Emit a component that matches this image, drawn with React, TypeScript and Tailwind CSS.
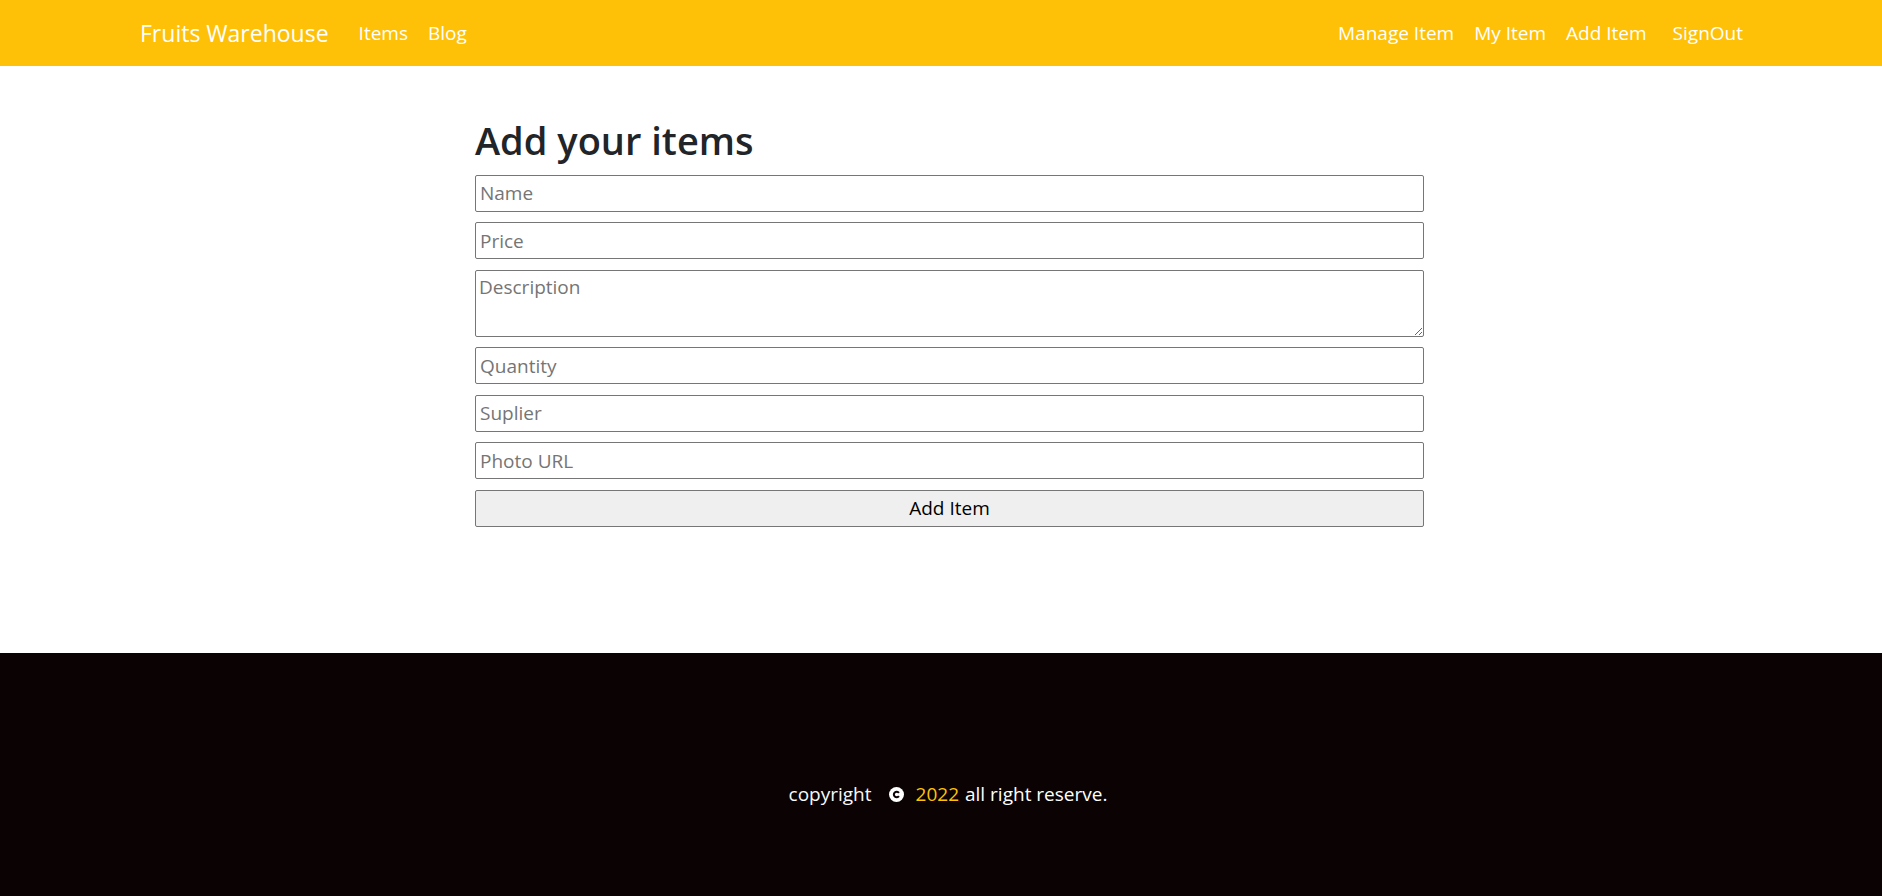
import React from 'react';

const font = { fontFamily: '"Segoe UI", "Open Sans", "Liberation Sans", sans-serif' };

function Navbar() {
  return (
    <nav className="h-[66px] bg-[#ffc107] flex items-center justify-between pl-[140px] pr-[139px] text-white">
      <div className="flex items-center">
        <a className="text-[23px] mr-[20px] leading-none">Fruits Warehouse</a>
        <a className="text-[19px] px-[10px]">Items</a>
        <a className="text-[19px] px-[10px]">Blog</a>
      </div>
      <div className="flex items-center">
        <a className="text-[19px] px-[10px]">Manage Item</a>
        <a className="text-[19px] px-[10px]">My Item</a>
        <a className="text-[19px] px-[10px]">Add Item</a>
        <a className="text-[19px] pl-[16px]">SignOut</a>
      </div>
    </nav>
  );
}

const inputCls =
  'block w-full h-[37px] border border-[#767676] rounded-[2px] px-[4px] text-[19px] text-black placeholder:text-[#757575] bg-white';

function AddItemForm() {
  return (
    <main className="pl-[475px] pt-[52px] h-[587px]">
      <div className="w-[949px]">
        <h1 className="text-[38px] font-semibold text-[#212529] leading-[1.2] mb-[11px]">Add your items</h1>
        <form className="flex flex-col gap-[10.5px]">
          <input className={inputCls} placeholder="Name" />
          <input className={inputCls} placeholder="Price" />
          <textarea
            className="block w-full h-[67px] border border-[#767676] rounded-[2px] px-[3px] py-[2px] text-[19px] placeholder:text-[#757575]"
            placeholder="Description"
          />
          <input className={inputCls} placeholder="Quantity" />
          <input className={inputCls} placeholder="Suplier" />
          <input className={inputCls} placeholder="Photo URL" />
          <button
            type="button"
            className="w-full h-[37px] bg-[#efefef] border border-[#767676] rounded-[2px] text-[19px] text-black"
          >
            Add Item
          </button>
        </form>
      </div>
    </main>
  );
}

function Footer() {
  return (
    <footer className="h-[243px] bg-[#0a0203] flex items-center justify-center pt-[40px] pl-[14px] text-[19px]">
      <p className="flex items-center text-[#f8f9fa]">
        <span>copyright</span>
        <svg className="ml-[17px] mr-[12px]" width="15" height="15" viewBox="0 0 16 16">
          <circle cx="8" cy="8" r="8" fill="#ffffff" />
          <path d="M10.6 6.2A3 3 0 1 0 10.6 9.8" fill="none" stroke="#0a0203" strokeWidth="2.2" />
        </svg>
        <span className="text-[#ffc107]">2022</span>
        <span className="ml-[6px] text-white">all right reserve.</span>
      </p>
    </footer>
  );
}

export default function App() {
  return (
    <div style={font} className="w-[1882px] min-h-[896px] bg-white">
      <Navbar />
      <AddItemForm />
      <Footer />
    </div>
  );
}
